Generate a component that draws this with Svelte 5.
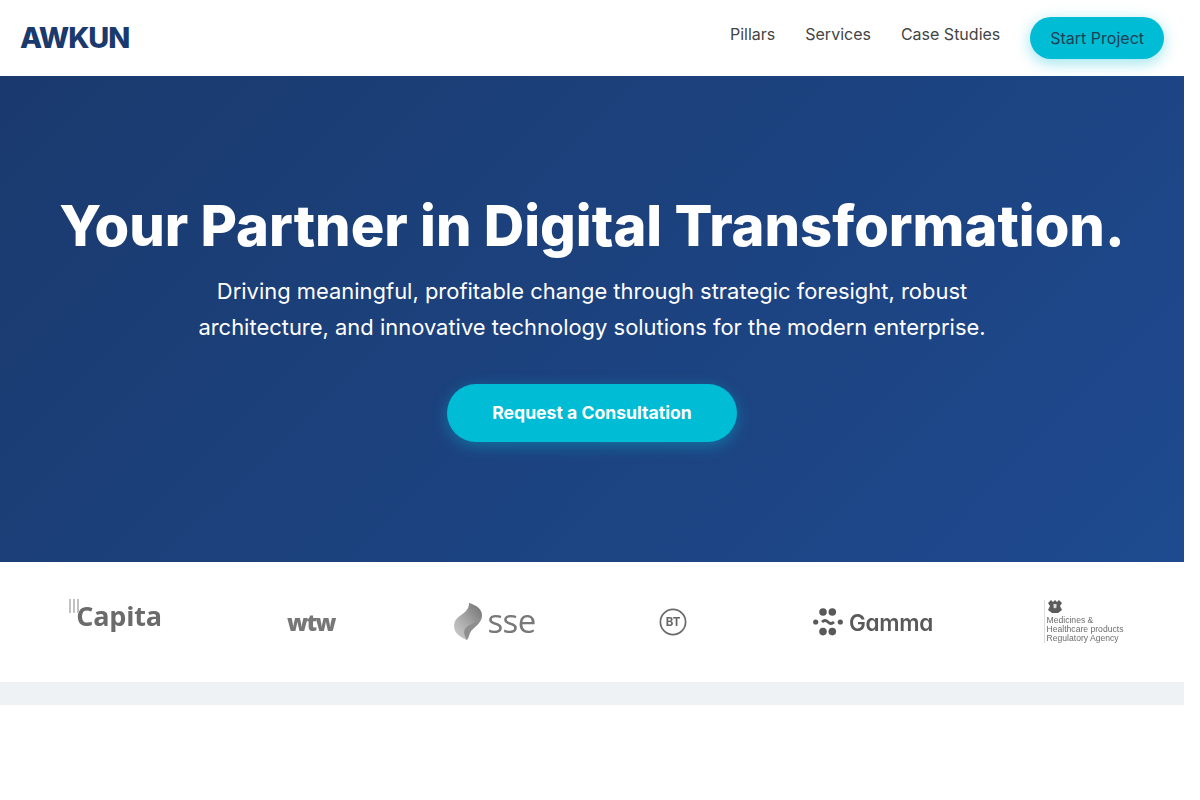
<script lang="ts">
	const navLinks = ['Pillars', 'Services', 'Case Studies'];
	const gammaDots = [
		[10, 4, 3.8], [19.3, 4, 3.8],
		[2.7, 14, 2.6], [27.3, 14, 2.6],
		[10, 23.6, 3.8], [19.3, 23.6, 3.8],
	];
</script>

<div class="page">
	<header class="site-header">
		<a class="logo" href="#top">AWKUN</a>
		<nav class="main-nav">
			{#each navLinks as link}
				<a class="nav-link" href="#top">{link}</a>
			{/each}
			<a class="nav-cta" href="#top">Start Project</a>
		</nav>
	</header>

	<section class="hero">
		<h1>Your Partner in Digital Transformation.</h1>
		<p>Driving meaningful, profitable change through strategic foresight, robust architecture, and innovative technology solutions for the modern enterprise.</p>
		<a class="hero-cta" href="#top">Request a Consultation</a>
	</section>

	<section class="clients">
		<div class="client capita">
			<span class="capita-bars"><i></i><i></i><i></i></span>
			<span>Capita</span>
		</div>
		<div class="client wtw">wtw</div>
		<div class="client sse">
			<svg width="29" height="38" viewBox="0 0 29 38">
				<defs>
					<linearGradient id="sseGrad" x1="0" y1="1" x2="1" y2="0">
						<stop offset="0" stop-color="#d2d2d2" />
						<stop offset="0.5" stop-color="#a4a4a4" />
						<stop offset="1" stop-color="#6e6e6e" />
					</linearGradient>
				</defs>
				<path d="M15 0C22 2 28 6 28 12C28 20 20 24 17 28C15 31 15 34 13 37C8 35 0 31 0 23C0 15 8 12 12 8C14 6 15 3 15 0Z" fill="url(#sseGrad)" />
				<path d="M28 12C28 20 20 24 17 28C15 31 15 34 13 37C11 33 9 30 11 26C14 21 24 20 28 12Z" fill="#8e8e8e" />
			</svg>
			<span>sse</span>
		</div>
		<div class="client bt">
			<svg width="28" height="28" viewBox="0 0 28 28">
				<circle cx="14" cy="14" r="12.6" fill="none" stroke="#6a6a6a" stroke-width="1.7" />
				<text x="14" y="18" text-anchor="middle">BT</text>
			</svg>
		</div>
		<div class="client gamma">
			<svg width="30" height="28" viewBox="0 0 30 28">
				{#each gammaDots as [cx, cy, r]}
					<circle {cx} {cy} {r} fill="#595959" />
				{/each}
				<path d="M9 14c2.200-2 4-2 6 0s3.800 2 6 0" fill="none" stroke="#595959" stroke-width="2.800" />
			</svg>
			<span>Gamma</span>
		</div>
		<div class="client mhra">
			<svg class="crest" width="14" height="13" viewBox="0 0 14 13">
				<path d="M0 3L3 0L5 2L7 0L9 2L11 0L14 3L12 6L14 10L10 13H4L0 10L2 6Z" fill="#5c5c5c" />
				<path d="M5.500 4H8.500V7.500L7 8.500L5.500 7.500Z" fill="#ddd" />
			</svg>
			<span>Medicines &amp;</span>
			<span>Healthcare products</span>
			<span>Regulatory Agency</span>
		</div>
	</section>

	<div class="band"></div>
</div>

<style>
	:global(body) {
		background: #fff;
	}

	.page {
		margin-right: 16px;
		font-family: Inter, 'Noto Sans', sans-serif;
		color: #333;
	}

	a {
		text-decoration: none;
	}

	.site-header {
		display: flex;
		align-items: center;
		justify-content: space-between;
		height: 76px;
		padding: 0 20px;
		background: #fff;
	}

	.logo {
		padding-bottom: 2px;
		font-size: 28.8px;
		font-weight: 800;
		letter-spacing: -1.1px;
		color: #1a3a6e;
	}

	.main-nav {
		display: flex;
		align-items: center;
		gap: 30px;
	}

	.nav-link {
		padding-bottom: 8px;
		font-size: 16px;
		color: #444;
	}

	.nav-cta {
		padding: 10px 20px;
		border-radius: 21px;
		background: #00bcd4;
		font-size: 16px;
		line-height: 22px;
		color: #1f3f55;
		box-shadow: 0 4px 15px rgba(0, 188, 212, 0.4);
	}

	.hero {
		display: flex;
		flex-direction: column;
		align-items: center;
		height: 486px;
		box-sizing: border-box;
		padding-top: 114px;
		background: linear-gradient(135deg, #1a3a6e 0%, #1e4a8f 100%);
		color: #fff;
		text-align: center;
	}

	h1 {
		margin: 0 0 11px;
		font-size: 56px;
		line-height: 72px;
		font-weight: 800;
	}

	.hero p {
		width: 800px;
		margin: 0 0 39px;
		font-size: 21.95px;
		line-height: 36px;
		font-weight: 400;
	}

	.hero-cta {
		display: block;
		width: 290px;
		box-sizing: border-box;
		padding: 18px 0;
		border-radius: 29px;
		background: #00bcd4;
		font-size: 17.6px;
		line-height: 22px;
		font-weight: 700;
		color: #fff;
		box-shadow: 0 4px 15px rgba(0, 188, 212, 0.4);
	}

	.clients {
		display: grid;
		grid-template-columns: 230px 162px 206px 150px 250px 170px;
		align-items: center;
		justify-items: center;
		height: 120px;
		background: #fff;
	}

	.client {
		display: flex;
		align-items: center;
		filter: blur(0.35px);
		color: #666;
	}

	.capita {
		position: relative;
		margin-top: -14px;
		padding-left: 8px;
		font-family: 'Open Sans', sans-serif;
		font-size: 27px;
		font-weight: 700;
		letter-spacing: -0.2px;
		color: #6b6b6b;
	}

	.capita-bars {
		position: absolute;
		left: 1px;
		top: 2px;
		display: flex;
		gap: 2px;
	}

	.capita-bars i {
		width: 2px;
		height: 14px;
		background: #c2c2c2;
	}

	.wtw {
		font-family: 'Open Sans', sans-serif;
		font-size: 23px;
		font-weight: 800;
		letter-spacing: -1.4px;
		color: #777;
	}

	.sse {
		gap: 4px;
		font-family: 'Open Sans', sans-serif;
		font-size: 33px;
		font-weight: 400;
		letter-spacing: -0.6px;
		color: #787878;
	}

	.sse span {
		margin-top: -4px;
	}

	.bt text {
		font-family: Inter, sans-serif;
		font-size: 11.5px;
		font-weight: 700;
		fill: #666;
	}

	.gamma {
		gap: 6px;
		font-size: 22.5px;
		font-weight: 600;
		letter-spacing: -0.3px;
		color: #595959;
		font-feature-settings: 'cv11';
	}

	.mhra {
		position: relative;
		flex-direction: column;
		align-items: flex-start;
		margin: -1px 0 0 1px;
		padding-left: 2px;
		border-left: 1px solid #ddd;
		font-family: 'Liberation Sans', sans-serif;
		font-size: 8.6px;
		line-height: 8.7px;
		color: #6d6d6d;
	}

	.crest {
		margin: 0 0 3px 1px;
	}

	.band {
		height: 23px;
		background: #eef2f5;
	}
</style>
